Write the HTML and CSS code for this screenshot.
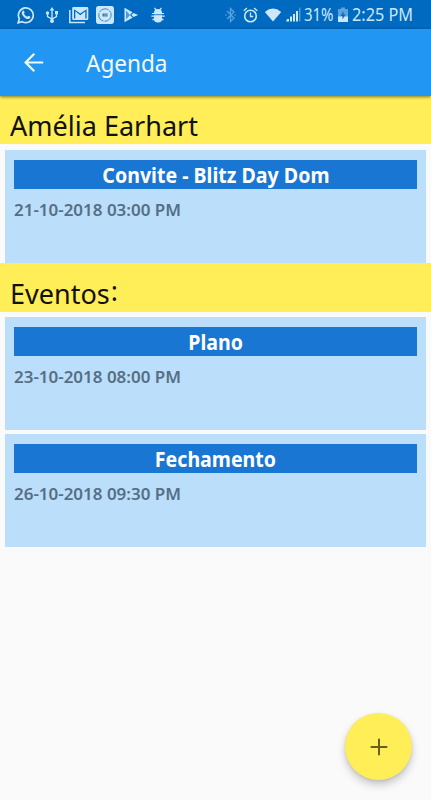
FILE: index.html
```html
<!DOCTYPE html>
<html lang="pt">
<head>
<meta charset="utf-8">
<title>Agenda</title>
<link rel="stylesheet" href="styles.css">
</head>
<body>
<div class="status">
  <div class="notifications">
    <svg width="18" height="18" viewBox="0 0 18 18"><path d="M1.200 16.800 2.300 12.700A7.400 7.400 0 1 1 5.200 15.700Z" fill="none" stroke="currentColor" stroke-width="1.700"/><path d="M5.400 5.200c.6-.8 1.300-.8 1.600-.1l.6 1.400c.1.400-.6.900-.6 1.200.8 1.500 1.800 2.400 3.300 3 .4 0 .8-1 1.200-.9l1.600.8c.8.500-.2 2.100-1.400 2.400C8.800 13.600 4.500 9.400 4.700 6.700Z" fill="currentColor"/></svg>
    <svg width="14" height="18" viewBox="0 0 14 18"><path d="M7 4v11M2.500 8v2.500L7 13l4.500-2.500V7.500" fill="none" stroke="currentColor" stroke-width="1.300"/><path d="m7 1 2.300 3.500H4.700ZM10 5h3v3.200h-3Z" fill="currentColor"/><circle cx="2.500" cy="7" r="1.700" fill="currentColor"/><circle cx="7" cy="15" r="2" fill="currentColor"/></svg>
    <svg width="20" height="18" viewBox="0 0 20 18"><path d="M.8 4v12.500H16" fill="none" stroke="currentColor" stroke-width="1.500"/><path fill-rule="evenodd" d="M4.500 1H18q1.300 0 1.300 1.300v10.400Q19.300 14 18 14H4.500q-1.300 0-1.300-1.300V2.300Q3.200 1 4.500 1ZM5 3.300V12.500h1.300V5.300l5 3.900 5-3.900v7.200h1.300V3.300l-6.300 4.200Z" fill="currentColor"/></svg>
    <svg class="app" width="18" height="18" viewBox="0 0 18 18"><rect width="18" height="18" rx="2.700" fill="currentColor"/><circle cx="9" cy="9" r="6.200" fill="none" stroke="#3f78ad" stroke-width=".9" stroke-dasharray="10 1"/><path d="M6.500 7.500h5v3h-5Z" fill="#3f78ad"/><path d="M9 7.500v3M10.500 8.500v1" stroke="#b4d9f5" stroke-width=".6"/></svg>
    <svg width="15" height="16" viewBox="0 0 15 16"><path d="M.5.700 8.500 5.300 6 8l2.500 2.700L.5 15.300Z" fill="currentColor"/><path d="m9.500 5.900 4.600 2.100-4.600 2.100L7.400 8Z" fill="currentColor"/><path d="M2 3.500v9L6 8Z" fill="#4a9bdc"/></svg>
    <svg class="debug" width="14" height="16" viewBox="0 0 14 16"><path d="M3 6a4 4 0 0 1 8 0v6a4 3.500 0 0 1-8 0Z" fill="currentColor"/><path d="m3.500.8 2 2.500m5-2.500-2 2.500M.3 9.100h13.400M1.500 12.500h11" stroke="currentColor" stroke-width="1.300"/><path d="M1 6.500h12" stroke="currentColor"/><path d="M3 7.700h8" stroke="#0869c0" stroke-width=".8"/></svg>
  </div>
  <div class="system">
    <svg class="bluetooth" width="11" height="16" viewBox="0 0 11 16"><path d="m2 4 7 7-3.500 3.500v-13L9 5l-7 7M.3 8h1.200m8 0h1.200" fill="none" stroke="currentColor" stroke-width="1.300"/></svg>
    <svg class="alarm" width="15" height="16" viewBox="0 0 15 16"><circle cx="7.500" cy="9" r="5.800" fill="none" stroke="currentColor" stroke-width="1.600"/><path d="M.7 3.800 4 1.100m7 0 3.300 2.700M7.500 5.500v4h2.700" fill="none" stroke="currentColor" stroke-width="1.300"/></svg>
    <svg class="wifi" width="18" height="14" viewBox="0 0 18 14"><path d="M.8 4Q9-2.800 17.200 4L9 13.500Z" fill="currentColor"/></svg>
    <svg class="signal" width="16" height="15" viewBox="0 0 16 15"><path d="M1 12h2v2.500H0Zm3-2.500h2v5H4ZM7 7h2v7.500H7Zm3-3h2v10.500h-2Z" fill="currentColor"/><path d="M13 1.500 14.500 0v14.500H13Z" fill="currentColor" opacity=".4"/></svg>
    <span class="percent">31%</span>
    <svg class="battery" width="10" height="16" viewBox="0 0 10 16"><path d="M0 2h3V.5h4V2h3v8H0Z" fill="currentColor" opacity=".45"/><path d="M0 9.500h10V15H0Z" fill="currentColor"/><path d="M5.500 4v3.500h2L4.500 12.500V9h-2Z" fill="#0869c0"/></svg>
    <span class="time">2:25 PM</span>
  </div>
</div>
<header class="appbar">
  <svg width="20" height="20" viewBox="0 0 20 20"><path d="M19.200 9.500H2M10.300.8 1.600 9.500l8.700 8.700" fill="none" stroke="currentColor" stroke-width="2.200"/></svg>
  <h1>Agenda</h1>
</header>
<main>
  <h2 class="section first"><span class="name">Amélia Earhart</span></h2>
  <article class="card guest"><h3><span>Convite - Blitz Day Dom</span></h3><p>21-10-2018 03:00 PM</p></article>
  <h2 class="section second"><span class="events">Eventos<i>:</i></span></h2>
  <article class="card"><h3><span>Plano</span></h3><p>23-10-2018 08:00 PM</p></article>
  <article class="card"><h3><span>Fechamento</span></h3><p>26-10-2018 09:30 PM</p></article>
</main>
<button class="fab" aria-label="Adicionar"><svg width="18" height="18" viewBox="0 0 18 18"><path d="M9 .7v16.600M.7 9h16.600" stroke="#665f22" stroke-width="2"/></svg></button>
</body>
</html>
```
FILE: styles.css
```css
* { box-sizing: border-box; }
body {
  margin: 0;
  height: 800px;
  overflow: hidden;
  background: #fafafa;
  font-family: "Noto Sans", sans-serif;
}
h1, h2, h3, p { margin: 0; font-weight: 400; white-space: nowrap; }
h1, span, p { transform-origin: 0 50%; }
svg { display: block; flex: none; }
.status {
  height: 29px;
  background: #0069c0;
  color: #cbe8fb;
  display: flex;
  align-items: center;
  justify-content: space-between;
  padding: 0 18px 0 17px;
}
.notifications { display: flex; align-items: center; gap: 10px; }
.app { margin-left: -3.500px; }
.debug { margin-left: 2px; }
.system { display: flex; align-items: center; }
.bluetooth { opacity: .45; margin-right: 7px; }
.alarm { margin-right: 6px; }
.wifi { margin-right: 4px; }
.signal { margin-right: 2px; }
.percent, .time { font-size: 17.500px; line-height: 27px; height: 28px; white-space: nowrap; }
.percent { width: 30px; margin-right: 4px; transform: scaleX(.855); }
.battery { margin-right: 4px; }
.time { width: 61px; transform: scaleX(.93); }
.appbar {
  position: relative;
  height: 67px;
  background: #2196f3;
  color: #f3faff;
  display: flex;
  align-items: center;
  padding-left: 24px;
  box-shadow: 0 1px 3px rgba(0, 0, 0, .5);
}
.appbar h1 { margin-left: 42px; font-size: 23.500px; line-height: 34px; transform: scaleX(.96); }
.section { background: #ffee58; color: #111; padding-left: 9.500px; }
.section span { display: inline-block; font-size: 28px; line-height: 38px; }
.section i { position: relative; top: -3px; left: 1px; font-style: normal; }
.first { height: 48px; padding-top: 10px; }
.second { height: 49px; padding-top: 11px; margin-bottom: 5px; }
.name { transform: scaleX(.965); }
.events { transform: scaleX(.965); }
.card { height: 113px; margin: 0 5px 4px; padding: 10px 9px; background: #bbdefb; }
.guest { margin: 6px 5px 0; }
.card h3 {
  height: 29px;
  background: #1976d2;
  color: #fff;
  font-size: 20.500px;
  line-height: 30px;
  font-weight: 700;
  text-align: center;
}
.card h3 span { display: inline-block; transform: scaleX(.955); transform-origin: 50% 50%; }
.card p { margin-top: 9px; width: max-content; font-size: 16.500px; line-height: 24px; font-weight: 600; color: #566f84; transform: scaleX(1.028); }
.fab {
  position: absolute;
  left: 345px;
  top: 713px;
  width: 67px;
  height: 67px;
  border: 0;
  padding: 0;
  border-radius: 50%;
  background: #ffee58;
  display: flex;
  align-items: center;
  justify-content: center;
  box-shadow: 0 5px 8px rgba(0, 0, 0, .2), 0 1px 3px rgba(0, 0, 0, .1);
}
```
